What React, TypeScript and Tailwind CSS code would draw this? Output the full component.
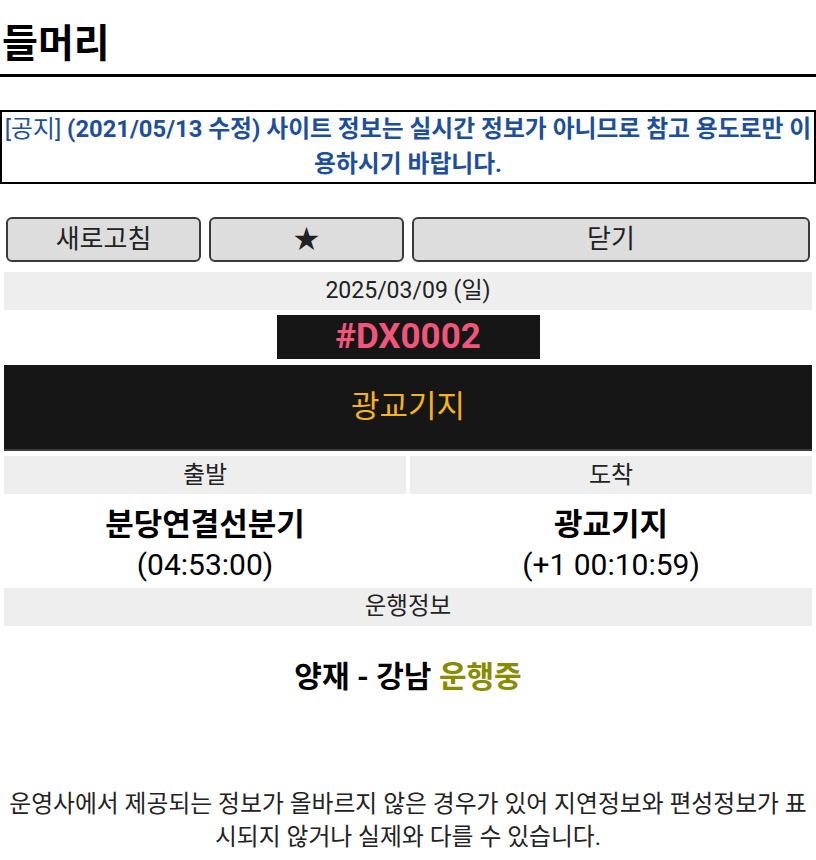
const font = "font-['Roboto','Noto_Sans_CJK_KR',sans-serif]";

const Cell = ({ children, className = "" }: { children: React.ReactNode; className?: string }) => (
  <div className={`flex h-[38px] items-center justify-center bg-[#eeeeee] text-[24px] text-[#222] ${className}`}>
    {children}
  </div>
);

const App = () => {
  return (
    <div className={`${font} w-[816px] bg-white text-black`}>
      <h1 className="border-b-[3px] border-black pb-[6px] pl-[2px] pt-[20px] text-[39px] font-bold leading-[48px]">
        들머리
      </h1>

      <div className="mt-[33px] break-all border-2 border-black text-center text-[23.8px] leading-[35px] text-[#1d4f9c]">
        <span>[공지]</span>{" "}
        <b>(2021/05/13 수정) 사이트 정보는 실시간 정보가 아니므로 참고 용도로만 이용하시기 바랍니다.</b>
      </div>

      <div className="mx-[6px] mt-[33px] grid h-[45px] grid-cols-4 gap-[8px] text-[26px] text-[#222]">
        <button className="rounded-[6px] border-2 border-[#3a3a3a] bg-[#dddddd]">새로고침</button>
        <button className="rounded-[6px] border-2 border-[#3a3a3a] bg-[#dddddd]">★</button>
        <button className="col-span-2 rounded-[6px] border-2 border-[#3a3a3a] bg-[#dddddd]">닫기</button>
      </div>

      <div className="mx-[4px] flex flex-col">
        <Cell className="mt-[10px] !text-[23px]">2025/03/09 (일)</Cell>

        <div className="mx-auto mt-[5px] flex h-[44px] w-[263px] items-center justify-center bg-[#161616] text-[35px] font-bold text-[#f0557a]">
          #DX0002
        </div>

        <div className="mt-[6px] flex h-[86px] items-center justify-center border-b-2 border-[#3c3c3c] bg-[#161616] text-[31px] text-[#f4b21c]">
          광교기지
        </div>

        <div className="mt-[5px] grid grid-cols-2 gap-[4px]">
          <Cell>출발</Cell>
          <Cell>도착</Cell>
        </div>

        <div className="grid grid-cols-2 gap-[4px] pb-[3px] pt-[11px] text-center leading-[40px]">
          <div>
            <div className="text-[31px] font-bold">분당연결선분기</div>
            <div className="text-[30px]">(04:53:00)</div>
          </div>
          <div>
            <div className="text-[31px] font-bold">광교기지</div>
            <div className="text-[30px]">(+1 00:10:59)</div>
          </div>
        </div>

        <Cell className="!text-[23.5px]">운행정보</Cell>
      </div>

      <div className="mt-[31px] text-center text-[30px] font-bold leading-[40px]">
        양재 - 강남 <span className="text-[#8a8c00]">운행중</span>
      </div>

      <p className="mt-[91px] break-all px-[4px] text-center text-[23.8px] leading-[33px] text-[#222]">
        운영사에서 제공되는 정보가 올바르지 않은 경우가 있어 지연정보와 편성정보가 표시되지 않거나 실제와 다를 수 있습니다.
      </p>
    </div>
  );
};

export default App;
